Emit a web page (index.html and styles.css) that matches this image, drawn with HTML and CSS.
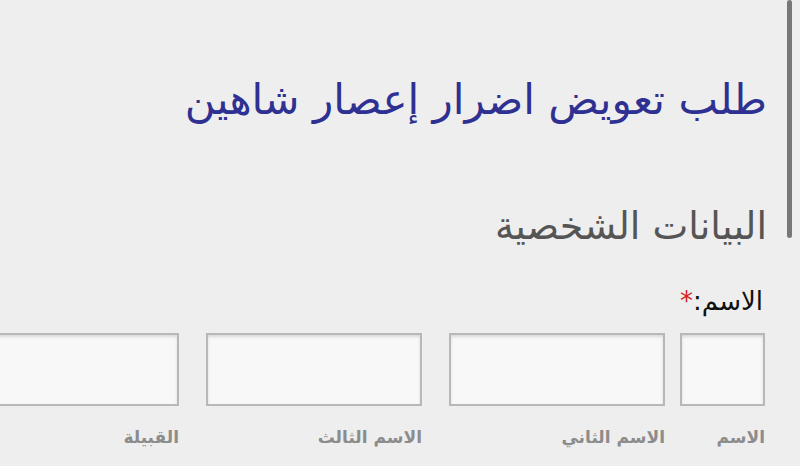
FILE: index.html
```html
<!DOCTYPE html>
<html lang="ar" dir="rtl">
<head>
<meta charset="utf-8">
<link rel="stylesheet" href="styles.css">
</head>
<body>
<div class="page">
  <h1 class="title">طلب تعويض اضرار إعصار شاهين</h1>
  <h2 class="section">البيانات الشخصية</h2>
  <div class="label">الاسم:<span class="req">*</span></div>
  <div class="row">
    <div class="field f-first"><div class="box"></div><div class="sub">الاسم</div></div>
    <div class="field"><div class="box"></div><div class="sub">الاسم الثاني</div></div>
    <div class="field"><div class="box"></div><div class="sub">الاسم الثالث</div></div>
    <div class="field"><div class="box"></div><div class="sub">القبيلة</div></div>
  </div>
</div>
<div class="scrollbar"></div>
</body>
</html>
```

FILE: styles.css
```css
html, body {
  margin: 0;
  padding: 0;
  height: 100%;
  overflow: hidden;
  background: #eeeeee;
}
body {
  font-family: "DejaVu Sans", sans-serif;
  position: relative;
}
.page {
  padding: 0 33px 0 0;
}
.title {
  margin: 0;
  padding-top: 72px;
  font-size: 42px;
  font-weight: normal;
  color: #2e3192;
  line-height: 56px;
}
.section {
  margin: 0;
  padding-top: 72px;
  font-size: 38px;
  font-weight: normal;
  color: #555555;
  line-height: 52px;
}
.label {
  margin-top: 33px;
  font-size: 26px;
  color: #111;
  line-height: 32px;
  padding-right: 4px;
}
.req {
  color: #d81e1e;
}
.row {
  display: flex;
  margin-top: 16px;
  margin-right: 2px;
}
.field {
  width: 216px;
  flex: none;
  margin-left: 27px;
}
.f-first {
  width: 85px;
  margin-left: 15px;
}
.box {
  height: 69px;
  background: #f8f8f8;
  border: 2px solid #b8b8b8;
  box-shadow: inset 0 2px 3px rgba(0,0,0,0.12);
}
.sub {
  margin-top: 21px;
  font-size: 17px;
  font-weight: bold;
  color: #8c8c8c;
}
.scrollbar {
  position: absolute;
  top: 0;
  right: 8px;
  width: 5px;
  height: 238px;
  background: #777;
  border-radius: 3px;
}
```
